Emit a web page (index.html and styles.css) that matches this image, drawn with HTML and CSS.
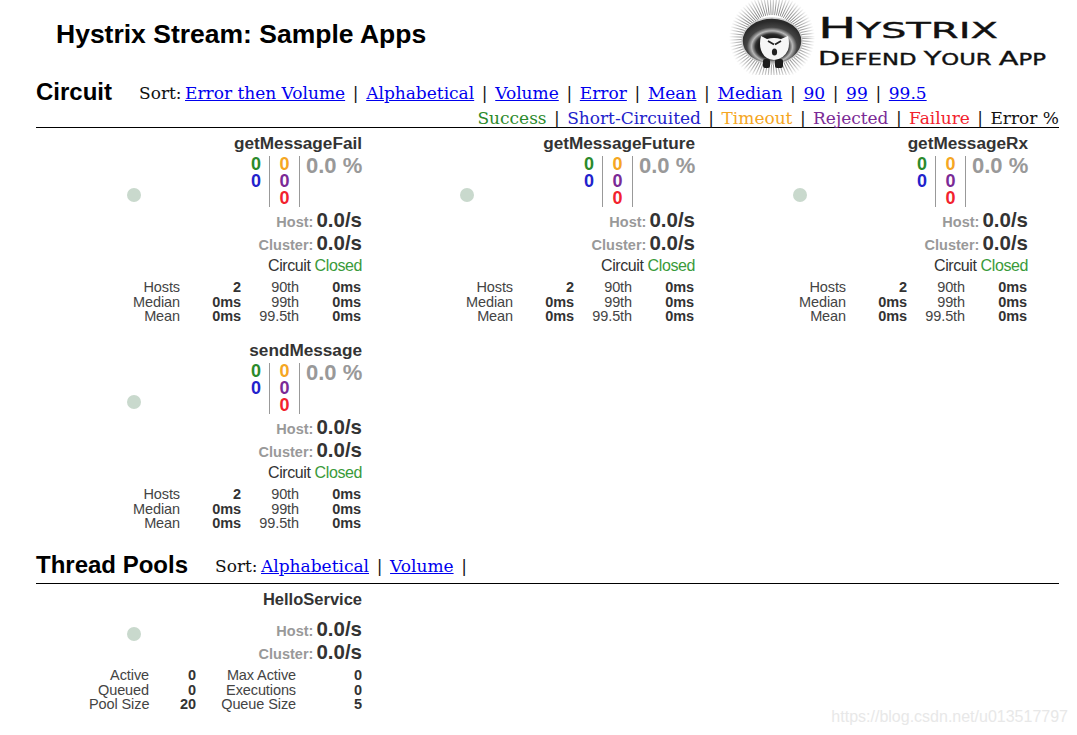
FILE: index.html
```html
<!DOCTYPE html>
<html lang="en">
<head>
<meta charset="utf-8">
<title>Hystrix Stream: Sample Apps</title>
<link rel="stylesheet" href="styles.css">
</head>
<body>
<header class="top">
  <h1 class="app-title">Hystrix Stream: Sample Apps</h1>
  <svg class="logo" width="330" height="75" viewBox="0 0 330 75">
    <defs>
      <radialGradient id="spike" gradientUnits="userSpaceOnUse" cx="44" cy="38" r="43">
        <stop offset="0.6" stop-color="#777"/>
        <stop offset="0.8" stop-color="#b4b4b4"/>
        <stop offset="1" stop-color="#fff"/>
      </radialGradient>
      <radialGradient id="shell" cx="0.5" cy="0.62" r="0.55">
        <stop offset="0.42" stop-color="#1e1e1e"/>
        <stop offset="0.5" stop-color="#333"/>
        <stop offset="0.62" stop-color="#b8b8b8"/>
        <stop offset="0.76" stop-color="#444"/>
        <stop offset="1" stop-color="#2a2a2a"/>
      </radialGradient>
    </defs>
    <circle cx="44" cy="38" r="33" fill="none" stroke="url(#spike)" stroke-width="20" stroke-dasharray="1 1.600"/>
    <ellipse cx="44" cy="41" rx="30" ry="23" fill="url(#shell)" stroke="#ccc" stroke-width="1.500"/>
    <rect x="35" y="59" width="7" height="9" rx="2" fill="#1c1c1c"/>
    <rect x="47" y="59" width="8" height="9" rx="2" fill="#1c1c1c"/>
    <path d="M33 36L39 39Q46 37 53 39L60 36Q62 44 60 50Q56 59 46 60Q36 59 33 50Q31 44 33 36Z" fill="#f6f6f6"/>
    <path d="M40 41l6 3.500M53 41l-6 3.500" stroke="#222" stroke-width="1.800" fill="none"/>
    <ellipse cx="46.500" cy="52" rx="2.600" ry="3.600" fill="#222"/>
    <text class="logo-big" x="90" y="38" textLength="180" lengthAdjust="spacingAndGlyphs">H<tspan class="logo-big-sc">YSTRIX</tspan></text>
    <text class="logo-small" x="90" y="65" textLength="228" lengthAdjust="spacingAndGlyphs">D<tspan class="logo-small-sc">EFEND </tspan>Y<tspan class="logo-small-sc">OUR </tspan>A<tspan class="logo-small-sc">PP</tspan></text>
  </svg>
</header>

<section class="section">
  <div class="section-head">
    <h2 class="section-title">Circuit</h2>
    <div class="sort sort-circuit"><span class="sort-label">Sort:</span> <a href="#">Error then Volume</a> <span class="sep">|</span> <a href="#">Alphabetical</a> <span class="sep">|</span> <a href="#">Volume</a> <span class="sep">|</span> <a href="#">Error</a> <span class="sep">|</span> <a href="#">Mean</a> <span class="sep">|</span> <a href="#">Median</a> <span class="sep">|</span> <a href="#">90</a> <span class="sep">|</span> <a href="#">99</a> <span class="sep">|</span> <a href="#">99.5</a></div>
  </div>
  <div class="legend"><span class="c-success">Success</span> <span class="sep">|</span> <span class="c-short">Short-Circuited</span> <span class="sep">|</span> <span class="c-timeout">Timeout</span> <span class="sep">|</span> <span class="c-rejected">Rejected</span> <span class="sep">|</span> <span class="c-failure">Failure</span> <span class="sep">|</span> Error %</div>
  <div class="rule"></div>
  <div class="grid">
    <article class="card">
      <span class="dot"></span>
      <div class="name">getMessageFail</div>
      <div class="counts">
        <div class="col col-a"><span class="c-success">0</span><span class="c-short">0</span></div>
        <div class="col col-b"><span class="c-timeout">0</span><span class="c-rejected">0</span><span class="c-failure">0</span></div>
        <div class="pct">0.0 %</div>
      </div>
      <div class="rate">Host: <b>0.0/s</b></div>
      <div class="rate">Cluster: <b>0.0/s</b></div>
      <div class="status">Circuit <span class="closed">Closed</span></div>
      <div class="stats">
        <span>Hosts</span><b>2</b><span>90th</span><b>0ms</b>
        <span>Median</span><b>0ms</b><span>99th</span><b>0ms</b>
        <span>Mean</span><b>0ms</b><span>99.5th</span><b>0ms</b>
      </div>
    </article>
    <article class="card">
      <span class="dot"></span>
      <div class="name">getMessageFuture</div>
      <div class="counts">
        <div class="col col-a"><span class="c-success">0</span><span class="c-short">0</span></div>
        <div class="col col-b"><span class="c-timeout">0</span><span class="c-rejected">0</span><span class="c-failure">0</span></div>
        <div class="pct">0.0 %</div>
      </div>
      <div class="rate">Host: <b>0.0/s</b></div>
      <div class="rate">Cluster: <b>0.0/s</b></div>
      <div class="status">Circuit <span class="closed">Closed</span></div>
      <div class="stats">
        <span>Hosts</span><b>2</b><span>90th</span><b>0ms</b>
        <span>Median</span><b>0ms</b><span>99th</span><b>0ms</b>
        <span>Mean</span><b>0ms</b><span>99.5th</span><b>0ms</b>
      </div>
    </article>
    <article class="card">
      <span class="dot"></span>
      <div class="name">getMessageRx</div>
      <div class="counts">
        <div class="col col-a"><span class="c-success">0</span><span class="c-short">0</span></div>
        <div class="col col-b"><span class="c-timeout">0</span><span class="c-rejected">0</span><span class="c-failure">0</span></div>
        <div class="pct">0.0 %</div>
      </div>
      <div class="rate">Host: <b>0.0/s</b></div>
      <div class="rate">Cluster: <b>0.0/s</b></div>
      <div class="status">Circuit <span class="closed">Closed</span></div>
      <div class="stats">
        <span>Hosts</span><b>2</b><span>90th</span><b>0ms</b>
        <span>Median</span><b>0ms</b><span>99th</span><b>0ms</b>
        <span>Mean</span><b>0ms</b><span>99.5th</span><b>0ms</b>
      </div>
    </article>
    <article class="card">
      <span class="dot"></span>
      <div class="name">sendMessage</div>
      <div class="counts">
        <div class="col col-a"><span class="c-success">0</span><span class="c-short">0</span></div>
        <div class="col col-b"><span class="c-timeout">0</span><span class="c-rejected">0</span><span class="c-failure">0</span></div>
        <div class="pct">0.0 %</div>
      </div>
      <div class="rate">Host: <b>0.0/s</b></div>
      <div class="rate">Cluster: <b>0.0/s</b></div>
      <div class="status">Circuit <span class="closed">Closed</span></div>
      <div class="stats">
        <span>Hosts</span><b>2</b><span>90th</span><b>0ms</b>
        <span>Median</span><b>0ms</b><span>99th</span><b>0ms</b>
        <span>Mean</span><b>0ms</b><span>99.5th</span><b>0ms</b>
      </div>
    </article>
  </div>
</section>

<section class="section section-pools">
  <div class="section-head">
    <h2 class="section-title">Thread Pools</h2>
    <div class="sort sort-pools"><span class="sort-label">Sort:</span> <a href="#">Alphabetical</a> <span class="sep">|</span> <a href="#">Volume</a> <span class="sep">|</span></div>
  </div>
  <div class="rule rule-pools"></div>
  <article class="card card-pool">
    <span class="dot dot-pool"></span>
    <div class="name name-pool">HelloService</div>
    <div class="rate">Host: <b>0.0/s</b></div>
    <div class="rate">Cluster: <b>0.0/s</b></div>
    <div class="stats stats-pool">
      <span>Active</span><b>0</b><span>Max Active</span><b>0</b>
      <span>Queued</span><b>0</b><span>Executions</span><b>0</b>
      <span>Pool Size</span><b>20</b><span>Queue Size</span><b>5</b>
    </div>
  </article>
</section>
<div class="watermark">https://blog.csdn.net/u013517797</div>
</body>
</html>
```

FILE: styles.css
```css
html, body { margin: 0; padding: 0; background: #fff; }
body {
  position: relative;
  height: 735px;
  overflow: hidden;
  font-family: "Liberation Sans", Arial, sans-serif;
  color: #333;
}

.top {
  display: flex;
  justify-content: space-between;
  align-items: flex-start;
  height: 75px;
  padding: 0 19px 0 56px;
}
.app-title {
  margin: 17px 0 0;
  font-size: 26.5px;
  line-height: 34px;
  font-weight: bold;
  color: #000;
}
.logo { display: block; flex: none; }
.logo text { font-family: "DejaVu Sans", sans-serif; fill: #111; stroke: #111; stroke-width: 0.35px; }
.logo-big { font-size: 28px; }
.logo-big-sc { font-size: 22px; }
.logo-small { font-size: 19px; }
.logo-small-sc { font-size: 15px; }

.section { padding: 0 18px 0 36px; }
.section-head { display: flex; align-items: center; height: 34px; }
.section-title {
  margin: 0;
  font-size: 24px;
  line-height: 34px;
  font-weight: bold;
  color: #000;
}
.sort, .legend {
  font-family: "DejaVu Serif", serif;
  color: #111;
}
.sort { font-size: 17px; line-height: 36px; height: 34px; }
.sort a { color: #00e; text-decoration: underline; }
.sort .sep { margin: 0 2.250px; }
.sort-label { margin-right: -2px; }
.sort-circuit { margin-left: 27px; }
.sort-pools { margin-left: 27px; }
.legend { font-size: 17px; text-align: right; line-height: 18px; height: 18px; white-space: nowrap; }
.sep { margin: 0 2px; }
.rule { height: 1px; background: #000; }

.c-success { color: #2b8a2b; }
.c-short { color: #2222cc; }
.c-timeout { color: #f5a623; }
.c-rejected { color: #7b2a96; }
.c-failure { color: #f2222e; }

.grid { display: grid; grid-template-columns: repeat(3, 333px); grid-auto-rows: 207px; }
.card {
  position: relative;
  padding: 6px 7px 0 0;
  text-align: right;
}
.dot {
  position: absolute;
  left: 91px;
  top: 60px;
  width: 14px;
  height: 14px;
  border-radius: 50%;
  background: #c9d9cd;
}
.name { font-size: 17.200px; line-height: 19px; font-weight: bold; color: #333; }
.counts { display: flex; justify-content: flex-end; height: 51px; margin-top: 3px; }
.col {
  display: flex;
  flex-direction: column;
  font-size: 18px;
  line-height: 17px;
  font-weight: bold;
  text-align: center;
}
.col-a { width: 26px; }
.col-b { width: 29px; border-left: 1px solid #999; border-right: 1px solid #999; }
.pct { width: 56px; margin-left: 6px; font-size: 22px; line-height: 20px; font-weight: bold; color: #999; white-space: nowrap; }
.rate { height: 23px; font-size: 14.500px; line-height: 23px; word-spacing: -1px; font-weight: bold; color: #999; }
.rate b { font-size: 20.500px; color: #333; }
.counts + .rate { margin-top: 1px; }
.status { margin-top: 1px; font-size: 16px; line-height: 22px; letter-spacing: -0.4px; color: #333; }
.closed { color: #3a9a3a; }
.stats {
  display: grid;
  grid-template-columns: 60px 61px 58px 62px;
  justify-content: end;
  margin: 3px 1px 0 0;
  font-size: 14.500px;
  line-height: 14.700px;
  letter-spacing: -0.1px;
  white-space: nowrap;
  color: #444;
}
.stats b { color: #333; }
.card-pool { width: 326px; height: 140px; }
.name-pool { margin-bottom: 8px; font-size: 16.500px; }
.dot-pool { top: 43px; }
.stats-pool { grid-template-columns: 60px 47px 100px 66px; margin: 5px 0 0 0; }

.section-pools { margin-top: 6px; }
.rule-pools { margin-top: 1px; }
.watermark {
  position: absolute;
  right: 9px;
  top: 708px;
  font-size: 16px;
  line-height: 18px;
  color: #e8e8e8;
}
```
